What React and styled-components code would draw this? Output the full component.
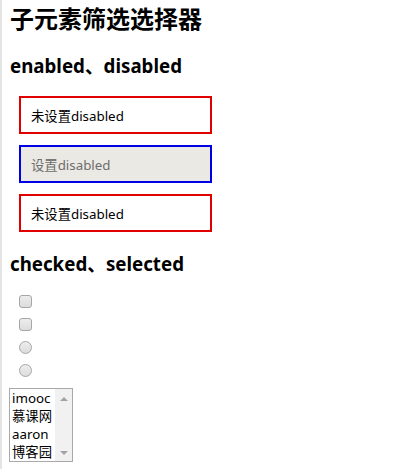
import React from 'react';
import styled, { createGlobalStyle } from 'styled-components';

const GlobalStyle = createGlobalStyle`
  html, body {
    margin: 0;
    padding: 0;
    background: #fff;
  }
  body {
    font-family: "Noto Sans", "Noto Sans CJK SC", sans-serif;
    color: #000;
  }
`;

const options = ['imooc', '慕课网', 'aaron', '博客园'];

const App = () => {
  return (
    <Page>
      <GlobalStyle />
      <Title>子元素筛选选择器</Title>
      <SectionTitle>enabled、disabled</SectionTitle>
      <FieldList>
        <Field type="text" defaultValue="未设置disabled" />
        <Field type="text" defaultValue="设置disabled" disabled />
        <Field type="text" defaultValue="未设置disabled" />
      </FieldList>
      <SectionTitle $top={21}>checked、selected</SectionTitle>
      <ChoiceList>
        <Choice type="checkbox" />
        <Choice type="checkbox" />
        <Choice type="radio" name="r" />
        <Choice type="radio" name="r" />
      </ChoiceList>
      <ListBox>
        <Options>
          {options.map((o) => (
            <Option key={o}>{o}</Option>
          ))}
        </Options>
        <ScrollTrack>
          <Arrow $dir="up" />
          <Arrow $dir="down" />
        </ScrollTrack>
      </ListBox>
    </Page>
  );
};

const Page = styled.div`
  min-height: 469px;
  box-sizing: border-box;
  border-left: 2px solid #e4e4e4;
  padding: 1px 0 0 8px;
`;

const Title = styled.h2`
  font-size: 24px;
  font-weight: bold;
  line-height: 28px;
  margin: 4px 0 0;
`;

const SectionTitle = styled.h3`
  font-size: 18.72px;
  font-weight: bold;
  line-height: 22px;
  margin: ${(p) => p.$top ?? 22}px 0 0;
`;

const FieldList = styled.div`
  display: flex;
  flex-direction: column;
  gap: 11px;
  padding: 19px 0 0 9px;
`;

const Field = styled.input`
  box-sizing: border-box;
  width: 193px;
  height: 38px;
  margin: 0;
  padding: 0 10px;
  border: 2px solid ${(p) => (p.disabled ? '#0000e6' : '#e00000')};
  background: ${(p) => (p.disabled ? '#ebe9e3' : '#fff')};
  color: ${(p) => (p.disabled ? '#6d6d6d' : '#000')};
  font-family: "Noto Sans", "Noto Sans CJK SC", sans-serif;
  font-size: 13.33px;
  outline: none;
`;

const ChoiceList = styled.div`
  display: flex;
  flex-direction: column;
  gap: 10px;
  padding: 20px 0 0 9px;
`;

const Choice = styled.input`
  appearance: none;
  width: 13px;
  height: 13px;
  margin: 0;
  box-sizing: border-box;
  border: 1px solid #a6a6a6;
  border-radius: ${(p) => (p.type === 'radio' ? '50%' : '3px')};
  background: linear-gradient(#ededed, #dcdcdc);
`;

const ListBox = styled.div`
  display: flex;
  width: 64px;
  height: 74px;
  box-sizing: border-box;
  margin-top: 11px;
  margin-left: -1px;
  border: 1px solid #a9a9a9;
  background: #fff;
`;

const Options = styled.div`
  flex: 1;
  padding: 0 0 0 2px;
  font-family: "Noto Sans", "Noto Sans CJK SC", sans-serif;
  font-size: 13.33px;
  line-height: 18px;
`;

const Option = styled.div`
  white-space: nowrap;
`;

const ScrollTrack = styled.div`
  width: 17px;
  background: #f1f1f1;
  display: flex;
  flex-direction: column;
  justify-content: space-between;
  align-items: center;
  padding: 8px 0 6px;
  box-sizing: border-box;
`;

const Arrow = styled.div`
  width: 0;
  height: 0;
  border-left: 4px solid transparent;
  border-right: 4px solid transparent;
  ${(p) =>
    p.$dir === 'up'
      ? 'border-bottom: 4px solid #a3a3a3;'
      : 'border-top: 4px solid #a3a3a3;'}
`;

export default App;
